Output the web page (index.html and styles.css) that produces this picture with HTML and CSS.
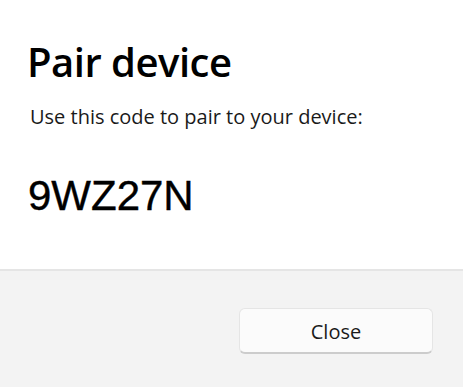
FILE: index.html
```html
<!DOCTYPE html>
<html>
<head>
<meta charset="utf-8">
<link rel="stylesheet" href="styles.css">
</head>
<body>
<div class="dialog">
  <div class="content">
    <h1 class="title">Pair device</h1>
    <p class="message">Use this code to pair to your device:</p>
    <div class="code">9WZ27N</div>
  </div>
  <div class="footer">
    <button class="btn">Close</button>
  </div>
</div>
</body>
</html>
```
FILE: styles.css
```css
html, body {
  margin: 0;
  padding: 0;
  width: 463px;
  height: 387px;
  overflow: hidden;
  background: #ffffff;
}
.dialog {
  display: flex;
  flex-direction: column;
  height: 387px;
  font-family: "Open Sans", "Noto Sans", sans-serif;
  color: #000;
}
.content {
  height: 269px;
  box-sizing: border-box;
  padding: 37px 0 0 27px;
  background: #fff;
}
.title {
  margin: 0;
  font-size: 40px;
  font-weight: 600;
  line-height: 50px;
  letter-spacing: -0.5px;
}
.message {
  margin: 16px 0 0 3px;
  font-size: 20px;
  line-height: 28px;
  letter-spacing: 0;
  color: #1a1a1a;
}
.code {
  margin: 41px 0 0 1px;
  font-family: "Liberation Sans", Arial, sans-serif;
  font-size: 42px;
  line-height: 48px;
  -webkit-text-stroke: 0.4px #000;
}
.footer {
  flex: 1;
  background: #f3f3f3;
  border-top: 2px solid #e5e5e5;
  display: flex;
  justify-content: flex-end;
  align-items: flex-start;
  padding: 37px 30px 0 0;
}
.btn {
  width: 194px;
  height: 46px;
  background: #fbfbfb;
  border: 1px solid #e5e5e5;
  border-bottom: 2px solid #cccccc;
  border-radius: 6px;
  font-family: "Open Sans", "Noto Sans", sans-serif;
  font-size: 20px;
  color: #1a1a1a;
  padding: 2px 0 0 0;
}
```
